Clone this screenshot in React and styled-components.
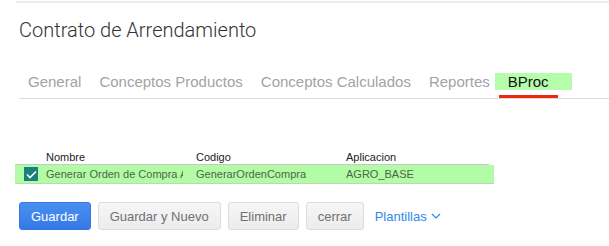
import React from 'react';
import styled, { createGlobalStyle } from 'styled-components';

const Global = createGlobalStyle`
  html, body {
    margin: 0;
    padding: 0;
    background: #fff;
  }
  body {
    font-family: "Liberation Sans", Arial, sans-serif;
  }
`;

const Page = styled.div`
  width: 609px;
  height: 246px;
  overflow: hidden;
  padding-top: 1px;
  box-sizing: border-box;
`;

const TopRule = styled.div`
  margin-left: 16px;
  height: 2px;
  background: #ececec;
`;

const Title = styled.h1`
  margin: 15px 0 0 19px;
  font-family: Roboto, "Liberation Sans", sans-serif;
  font-weight: 300;
  font-size: 20px;
  line-height: 24px;
  color: #333;
`;

const TabBar = styled.div`
  display: flex;
  align-items: flex-start;
  margin: 31px 0 0 19px;
  height: 25px;
  border-bottom: 1px solid #dcdcdc;
`;

const Tab = styled.div`
  padding: 0 9px;
  font-size: 15px;
  line-height: 17px;
  color: #a3a3a3;
  white-space: nowrap;
`;

const ActiveTab = styled.div`
  display: flex;
  flex-direction: column;
  margin-left: -4px;
`;

const ActiveLabel = styled.div`
  width: 64px;
  padding-left: 13px;
  font-size: 15px;
  line-height: 17px;
  color: #111;
  background: #b6fdab;
`;

const Underline = styled.div`
  margin: 5px 0 0 4px;
  width: 59px;
  height: 3px;
  background: #f0280a;
`;

const Grid = styled.div`
  margin: 51px 0 0 15px;
  width: 479px;
  font-size: 11px;
`;

const HeaderRow = styled.div`
  display: grid;
  grid-template-columns: 31px 150px 150px 1fr;
  width: 474px;
  height: 14px;
  line-height: 14px;
  color: #222;
  border-bottom: 1px solid #c8c8c8;
`;

const HeadCell = styled.div`
  white-space: nowrap;
`;

const DataRow = styled.div`
  display: grid;
  grid-template-columns: 31px 150px 150px 1fr;
  align-items: center;
  height: 18px;
  background: #b3fca6;
  color: #4d664a;
  border-bottom: 1px solid #b8d9b2;
`;

const Cell = styled.div`
  min-width: 0;
  white-space: nowrap;
  overflow: hidden;
  font-size: 11px;
  margin-right: 13px;
`;

const CheckBox = styled.div`
  margin-left: 9px;
  width: 14px;
  height: 14px;
  background: #1b817c;
  display: flex;
  align-items: center;
  justify-content: center;
`;

const Actions = styled.div`
  display: flex;
  align-items: center;
  gap: 7px;
  margin: 18px 0 0 19px;
`;

const Button = styled.button`
  height: 28px;
  padding: 0 11px;
  border-radius: 3px;
  font-family: "Liberation Sans", Arial, sans-serif;
  font-size: 13px;
  cursor: pointer;
  border: 1px solid ${p => (p.$primary ? '#3a74e0' : '#dcdcdc')};
  background: ${p =>
    p.$primary
      ? 'linear-gradient(#4a90f0, #3479e6)'
      : 'linear-gradient(#f6f6f6, #ececec)'};
  color: ${p => (p.$primary ? '#fff' : '#707070')};
`;

const Link = styled.a`
  display: flex;
  align-items: center;
  gap: 4px;
  margin-left: 4px;
  font-size: 13px;
  color: #2d8ae8;
  text-decoration: none;
`;

const Check = () => (
  <svg width="11" height="9" viewBox="0 0 11 9">
    <path d="M1 4.5 L4 7.5 L10 1.5" fill="none" stroke="#fff" strokeWidth="1.6" />
  </svg>
);

const Chevron = () => (
  <svg width="10" height="6" viewBox="0 0 10 6">
    <path d="M1 1 L5 5 L9 1" fill="none" stroke="#2d8ae8" strokeWidth="1.2" />
  </svg>
);

export default function App() {
  return (
    <>
      <Global />
      <Page>
        <TopRule />
        <Title>Contrato de Arrendamiento</Title>
        <TabBar>
          <Tab>General</Tab>
          <Tab>Conceptos Productos</Tab>
          <Tab>Conceptos Calculados</Tab>
          <Tab>Reportes</Tab>
          <ActiveTab>
            <ActiveLabel>BProc</ActiveLabel>
            <Underline />
          </ActiveTab>
        </TabBar>
        <Grid>
          <HeaderRow>
            <HeadCell />
            <HeadCell>Nombre</HeadCell>
            <HeadCell>Codigo</HeadCell>
            <HeadCell>Aplicacion</HeadCell>
          </HeaderRow>
          <DataRow>
            <CheckBox><Check /></CheckBox>
            <Cell>Generar Orden de Compra Automática</Cell>
            <Cell>GenerarOrdenCompra</Cell>
            <Cell>AGRO_BASE</Cell>
          </DataRow>
        </Grid>
        <Actions>
          <Button $primary>Guardar</Button>
          <Button>Guardar y Nuevo</Button>
          <Button>Eliminar</Button>
          <Button>cerrar</Button>
          <Link href="#">Plantillas <Chevron /></Link>
        </Actions>
      </Page>
    </>
  );
}
